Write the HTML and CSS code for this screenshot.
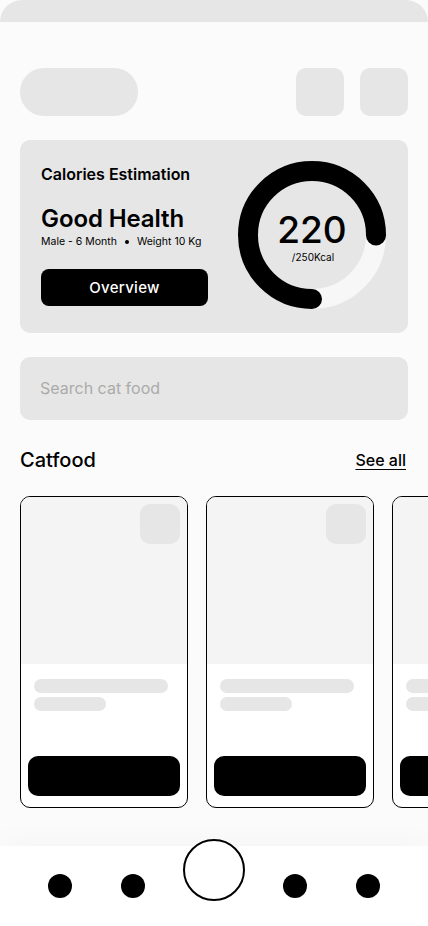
FILE: index.html
```html
<!DOCTYPE html>
<html lang="en">
<head>
<meta charset="utf-8">
<title>Catfood</title>
<link rel="stylesheet" href="styles.css">
</head>
<body>
<div class="screen">
  <div class="status-bar"></div>

  <header class="header">
    <div class="pill"></div>
    <div class="header-actions">
      <div class="square"></div>
      <div class="square"></div>
    </div>
  </header>

  <section class="calories">
    <div class="cal-info">
      <h2 class="cal-title">Calories Estimation</h2>
      <h1 class="cal-status">Good Health</h1>
      <p class="cal-meta">Male - 6 Month <span class="bullet"></span> Weight 10 Kg</p>
      <button class="cal-btn">Overview</button>
    </div>
    <svg class="donut" width="148" height="148" viewBox="0 0 148 148">
      <circle cx="74" cy="74" r="64" fill="none" stroke="#f7f7f7" stroke-width="20"/>
      <circle cx="74" cy="74" r="64" fill="none" stroke="#000" stroke-width="20" stroke-linecap="round" stroke-dasharray="301.6 402.1" transform="rotate(90 74 74)"/>
      <text x="74" y="82" text-anchor="middle" class="donut-value">220</text>
      <text x="75" y="100" text-anchor="middle" class="donut-unit">/250Kcal</text>
    </svg>
  </section>

  <div class="search">
    <span class="search-placeholder">Search cat food</span>
  </div>

  <div class="section-head">
    <h3 class="section-title">Catfood</h3>
    <a class="see-all" href="#">See all</a>
  </div>

  <div class="products">
    <div class="product">
      <div class="product-img"><div class="fav"></div></div>
      <div class="product-lines"><div class="line long"></div><div class="line short"></div></div>
      <div class="product-btn"></div>
    </div>
    <div class="product">
      <div class="product-img"><div class="fav"></div></div>
      <div class="product-lines"><div class="line long"></div><div class="line short"></div></div>
      <div class="product-btn"></div>
    </div>
    <div class="product">
      <div class="product-img"><div class="fav"></div></div>
      <div class="product-lines"><div class="line long"></div><div class="line short"></div></div>
      <div class="product-btn"></div>
    </div>
  </div>

  <nav class="nav">
    <span class="dot dot-first"></span>
    <span class="dot"></span>
    <span class="center-btn"></span>
    <span class="dot"></span>
    <span class="dot dot-last"></span>
  </nav>
</div>
</body>
</html>
```

FILE: styles.css
```css
* { box-sizing: border-box; }
html, body { margin: 0; padding: 0; background: #ffffff; }
body { font-family: Inter, "Noto Sans", sans-serif; color: #000; }

.screen {
  width: 428px;
  height: 926px;
  overflow: hidden;
  background: #fbfbfb;
  display: flex;
  flex-direction: column;
}

.status-bar {
  height: 22px;
  flex: none;
  background: #e6e6e6;
  border-radius: 22px 22px 0 0;
}

.header {
  margin-top: 46px;
  padding: 0 20px;
  height: 48px;
  flex: none;
  display: flex;
  justify-content: space-between;
}
.pill { width: 118px; height: 48px; border-radius: 24px; background: #e6e6e6; }
.header-actions { display: flex; gap: 16px; }
.square { width: 48px; height: 48px; border-radius: 10px; background: #e6e6e6; }

.calories {
  margin: 24px 20px 0;
  height: 193px;
  flex: none;
  background: #e6e6e6;
  border-radius: 10px;
  padding: 0 22px 0 21px;
  display: flex;
  justify-content: space-between;
}
.cal-info { width: 167px; display: flex; flex-direction: column; }
.cal-title { margin: 24px 0 0; font-size: 16px; line-height: 20px; font-weight: 600; }
.cal-status { margin: 20px 0 0; font-size: 24px; line-height: 30px; font-weight: 600; letter-spacing: -0.1px; }
.cal-meta {
  margin: 1px 0 0; font-size: 10.5px; line-height: 14px; font-weight: 400;
  display: flex; align-items: center; white-space: nowrap;
}
.bullet { width: 4px; height: 4px; border-radius: 50%; background: #000; margin: 0 8px; }
.cal-btn {
  margin-top: 20px;
  height: 37px;
  width: 167px;
  border: none;
  border-radius: 8px;
  background: #000;
  color: #fff;
  font-family: Inter, sans-serif;
  font-size: 15px;
  font-weight: 500;
  letter-spacing: 0.3px;
  padding: 0;
}
.donut { margin-top: 21px; flex: none; }
.donut-value { font-family: Inter, sans-serif; font-size: 37px; font-weight: 500; fill: #000; }
.donut-unit { font-family: Inter, sans-serif; font-size: 10px; font-weight: 400; fill: #000; }

.search {
  margin: 24px 20px 0;
  height: 63px;
  flex: none;
  background: #e6e6e6;
  border-radius: 10px;
  padding: 0 20px 2px;
  display: flex;
  align-items: center;
}
.search-placeholder { font-size: 16px; color: #ababab; }

.section-head {
  margin-top: 20px;
  padding: 0 22px 0 20px;
  height: 40px;
  flex: none;
  display: flex;
  align-items: center;
  justify-content: space-between;
}
.section-title { margin: 0; font-size: 20px; font-weight: 500; }
.see-all { color: #000; font-size: 16px; font-weight: 500; text-decoration: underline; text-underline-offset: 3px; }

.products {
  margin-top: 16px;
  padding-left: 20px;
  display: flex;
  gap: 18px;
  flex: none;
}
.product {
  width: 168px;
  height: 312px;
  flex: none;
  border: 1px solid #000;
  border-radius: 10px;
  background: #fff;
  overflow: hidden;
  display: flex;
  flex-direction: column;
}
.product-img {
  height: 167px;
  background: #f4f4f4;
  display: flex;
  justify-content: flex-end;
  align-items: flex-start;
  padding: 7px;
}
.fav { width: 40px; height: 40px; border-radius: 10px; background: #e6e6e6; }
.product-lines { padding: 15px 13px 0; display: flex; flex-direction: column; gap: 4px; }
.line { height: 14px; border-radius: 7px; background: #e6e6e6; }
.line.long { width: 134px; }
.line.short { width: 72px; }
.product-btn {
  margin: auto 7px 11px;
  height: 40px;
  border-radius: 10px;
  background: #000;
}

.nav {
  margin-top: auto;
  height: 80px;
  flex: none;
  background: #fff;
  box-shadow: 0 -10px 22px rgba(0, 0, 0, 0.018);
  display: flex;
  align-items: flex-start;
  padding: 28px 0 0 48px;
  gap: 38px;
}
.dot { width: 24px; height: 24px; border-radius: 50%; background: #000; }
.dot-first { margin-right: 11px; }
.dot-last { margin-left: 11px; }
.center-btn {
  width: 62px;
  height: 62px;
  margin-top: -35px;
  border-radius: 50%;
  border: 2px solid #000;
  background: #fff;
}
```
